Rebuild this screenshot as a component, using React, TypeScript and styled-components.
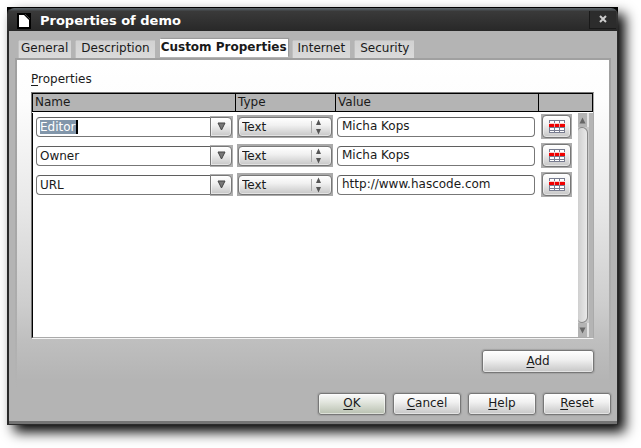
import React, { useEffect, useRef, useState } from "react";
import styled, { createGlobalStyle, css } from "styled-components";

const GlobalStyle = createGlobalStyle`
  *, *::before, *::after { box-sizing: border-box; }
  body { margin: 0; background: #fff; }
  body, button, input, select {
    font-family: "DejaVu Sans", sans-serif;
    font-size: 12px;
    line-height: 14px;
    color: #1a1a1a;
  }
`;

const Dialog = styled.main`
  margin: 7px 23px 23px 7px;
  background: #000;
  box-shadow: 7px 7px 12px #000;
`;

const TitleBar = styled.header`
  display: flex;
  align-items: center;
  height: 24px;
  padding: 2px 0 0 9px;
  border-top: 1px solid #000;
  border-radius: 7px 7px 0 0;
  background: linear-gradient(#5c6468 0, #4a5054 2px, #3a3a3a 3px, #282828 100%);
  border-left: 1px solid #333;
`;

const Title = styled.h1`
  flex: 1;
  margin: 0 0 0 9px;
  font-size: 13px;
  line-height: 16px;
  color: #fff;
`;

const CloseButton = styled.button`
  display: flex;
  align-items: center;
  justify-content: center;
  width: 27px;
  height: 18px;
  margin: 0 2px 2px 0;
  padding: 0;
  border: 0;
  border-left: 1px solid #191919;
  border-bottom: 1px solid #191919;
  background: #2c2c2c;
`;

const Body = styled.div`
  padding: 8px 6px 9px;
  border: solid #2b2b2b;
  border-width: 0 1px 1px 2px;
  box-shadow: inset 0 -3px #747474;
  background: #b4b4b4;
`;

const TabList = styled.div`
  display: flex;
  align-items: flex-end;
  gap: 5px;
  height: 19px;
  padding-left: 4px;
`;

const Tab = styled.button<{ $active: boolean }>`
  height: 17px;
  padding: 0 5px 3px;
  border: 0;
  white-space: nowrap;
  background: linear-gradient(#d2d2d2, #dadada);
  box-shadow: 0 -1px #c4c4c4, -1px 0 #c0c0c0;
  &:first-child { padding-left: 2px; padding-right: 3px; }
  ${(p) =>
    p.$active &&
    css`
      align-self: flex-start;
      height: 18px;
      padding: 0 1px 2px;
      font-weight: bold;
      background: #fff;
      box-shadow: 1px -1px 1px #9a9a9a;
    `}
`;

const PanelFrame = styled.div`
  padding: 2px 2px 0;
  background: linear-gradient(#a0a0a0 0, #a6a6a6 160px, #b4b4b4 100%);
`;

const Panel = styled.section`
  padding: 12px 15px 15px 14px;
  background: linear-gradient(
    #fff 0,
    #fdfdfd 40px,
    #e8e8e8 145px,
    #cdcdcd 245px,
    #bfbfbf 280px,
    #b4b4b4 320px
  );
`;

const Caption = styled.h2`
  margin: 0 0 6px;
  font-size: 12px;
  line-height: 14px;
  font-weight: normal;
`;

const Mnemonic = styled.span`
  text-decoration: underline;
  text-decoration-thickness: 1px;
  text-underline-offset: 2px;
`;

const ListBox = styled.div`
  display: grid;
  grid-template-columns: 1fr 15px;
  grid-template-rows: 20px 225px;
  border: 1px solid #777;
  border-right-color: #aaa;
  border-bottom-color: #f4f4f4;
  background: #fff;
`;

const Table = styled.table`
  grid-area: 1 / 1 / 3 / 3;
  align-self: start;
  width: 100%;
  table-layout: fixed;
  border-collapse: separate;
  border-spacing: 0;
`;

const HeadCell = styled.th<{ $width?: number }>`
  width: ${(p) => (p.$width ? `${p.$width}px` : "auto")};
  height: 19px;
  padding: 0 2px 1px;
  border: solid #000;
  border-width: 1px 0 1px 1px;
  background: #b4b4b4;
  font-weight: normal;
  text-align: left;
  &:last-child { border-right-width: 1px; }
`;

const Cell = styled.td`
  height: 29px;
  padding: 0 3px 0 2px;
  &:first-child { padding-left: 4px; }
`;

const ListEdge = styled.div`
  grid-area: 2 / 1;
  border-left: 1px solid #000;
  border-bottom: 1px solid #aaa;
`;

const ScrollBar = styled.div`
  grid-area: 2 / 2;
  display: flex;
  flex-direction: column;
  border-right: 4px solid #b4b4b4;
  border-bottom: 1px solid #aaa;
  background: #c9c9c9;
`;

const ScrollArrow = styled.button`
  display: flex;
  align-items: center;
  justify-content: center;
  height: 14px;
  padding: 0;
  border: 0;
  border-right: 2px solid #e4e4e4;
  background: #b4b4b4;
`;

const ScrollThumb = styled.div`
  flex: 1;
  margin-right: 1px;
  border: 1px solid #888;
  border-left: 0;
  border-radius: 4px 6px 6px 4px;
  background: linear-gradient(90deg, #cfcfcf, #e9e9e9);
`;

const Field = styled.input`
  display: block;
  width: 100%;
  height: 20px;
  padding: 0 4px 2px;
  border: 1px solid #777;
  border-top-color: #5f5f5f;
  border-radius: 4px;
  outline: none;
  background: #fff;
`;

const Combo = styled.div`
  position: relative;
  display: flex;
  height: 22px;
  margin-right: -1px;
  align-items: center;
`;

const ComboInput = styled(Field)`
  flex: 1;
  min-width: 0;
  padding: 0 3px;
  border-right: 0;
  border-radius: 4px 0 0 4px;
  &::selection { background: #8296aa; color: #fff; }
`;

const Caret = styled.span`
  position: absolute;
  left: 40px;
  top: 4px;
  width: 2px;
  height: 14px;
  background: #000;
`;

const raised = css`
  border: 1px solid #777;
  background: linear-gradient(#fff 0, #f1f1f1 40%, #c6c6c6 100%);
  box-shadow: inset 0 0 0 1px #ffffff80;
`;

const ComboBackdrop = styled.div`
  height: 22px;
  padding: 1px 1px 1px 0;
  background: #b0b0b0;
`;

const ComboButton = styled.button`
  display: flex;
  align-items: center;
  justify-content: center;
  width: 22px;
  height: 20px;
  padding: 0;
  ${raised}
  border-radius: 0 4px 4px 0;
`;

const SelectWrap = styled.div`
  display: grid;
  align-items: center;
  height: 23px;
  margin-right: -1px;
  padding: 1px;
  background: #aaa;
  svg {
    grid-area: 1 / 1;
    justify-self: end;
    margin-right: 10px;
    pointer-events: none;
    z-index: 1;
  }
`;

const Select = styled.select`
  grid-area: 1 / 1;
  width: 100%;
  height: 20px;
  padding: 0 3px;
  appearance: none;
  outline: none;
  ${raised}
  border-radius: 4px;
`;

const RemoveBackdrop = styled.div`
  width: 31px;
  padding: 1px;
  margin-left: 1px;
  background: #adadad;
`;

const RemoveButton = styled.button`
  display: flex;
  align-items: center;
  justify-content: center;
  width: 100%;
  height: 23px;
  padding: 0;
  ${raised}
  border-radius: 4px;
`;

const PushButton = styled.button<{ $wide?: boolean; $primary?: boolean }>`
  width: ${(p) => (p.$wide ? 112 : 68)}px;
  height: ${(p) => (p.$wide ? 23 : 22)}px;
  padding: 0 0 2px;
  ${raised}
  border-radius: 3px;
  box-shadow: inset 0 0 0 1px #ffffff80, 0 0 1px 1px #a2a2a2;
  ${(p) =>
    p.$primary &&
    css`
      background: linear-gradient(#fafafa 0, #e2e6de 40%, #b8c0b0 100%);
    `}
`;

const AddRow = styled.div`
  display: flex;
  justify-content: flex-end;
  padding-top: 11px;
`;

const Footer = styled.footer`
  display: flex;
  justify-content: flex-end;
  gap: 7px;
  padding-top: 5px;
`;

const DocumentIcon = () => (
  <svg width="14" height="16" viewBox="0 0 14 16" aria-hidden="true">
    <rect width="14" height="16" fill="#000" />
    <path d="M2 2h5l5 5v7H2z" fill="#fff" />
    <path d="M8 1l5 5" stroke="#444" strokeWidth="1" />
  </svg>
);

const DownTriangle = () => (
  <svg width="9" height="9" viewBox="0 0 9 9" aria-hidden="true">
    <path d="M1 1h7L4.500 8z" fill="#777" stroke="#444" />
  </svg>
);

const Spinner = () => (
  <svg width="11" height="16" viewBox="0 0 11 16" aria-hidden="true">
    <path d="M.5 2v12" stroke="#aaa" />
    <path d="M5 6L7.500 .5 10 6zM5 10h5L7.500 15.500z" fill="#555" />
  </svg>
);

const GridIcon = () => (
  <svg width="16" height="13" viewBox="0 0 16 13" shapeRendering="crispEdges" aria-hidden="true">
    <rect width="16" height="13" fill="#787c90" />
    <g fill="#fff">
      {[1, 8, 11].map((y) =>
        [1, 6, 11].map((x) => (
          <rect key={`${x}-${y}`} x={x} y={y} width="4" height={y === 11 ? 1 : 2} />
        ))
      )}
    </g>
    <path d="M0 3h16v1H0z" fill="#f4d0d0" />
    <path d="M0 4h5v3H0zM6 4h4v3H6zM11 4h5v3h-5z" fill="#f00000" />
    <path d="M5 4h1v3H5zM10 4h1v3h-1z" fill="#f0a0a0" />
  </svg>
);

const ArrowIcon = ({ down }: { down?: boolean }) => (
  <svg width="7" height="7" viewBox="0 0 7 7" aria-hidden="true">
    <path d={down ? "M.5 .5h6l-3 6z" : "M.5 6.500h6l-3-6z"} fill="#666" />
  </svg>
);

const Keyed = ({ text }: { text: string }) => (
  <>
    <Mnemonic>{text[0]}</Mnemonic>
    {text.slice(1)}
  </>
);

const tabs = ["General", "Description", "Custom Properties", "Internet", "Security"];
const properties = [
  { name: "Editor", value: "Micha Kops" },
  { name: "Owner", value: "Micha Kops" },
  { name: "URL", value: "http://www.hascode.com" },
];

function NameCombo({ name, focused }: { name: string; focused: boolean }) {
  const ref = useRef<HTMLInputElement>(null);
  const [selected, setSelected] = useState(focused);
  useEffect(() => {
    if (focused && ref.current) {
      ref.current.focus();
      ref.current.select();
    }
  }, [focused]);
  return (
    <Combo>
      <ComboInput
        ref={ref}
        aria-label="Name"
        spellCheck={false}
        defaultValue={name}
        onChange={() => setSelected(false)}
        onBlur={() => setSelected(false)}
      />
      {selected && <Caret />}
      <ComboBackdrop>
        <ComboButton type="button" aria-label="Show names">
          <DownTriangle />
        </ComboButton>
      </ComboBackdrop>
    </Combo>
  );
}

export default function App() {
  const [active, setActive] = useState("Custom Properties");
  return (
    <>
      <GlobalStyle />
      <Dialog>
        <TitleBar>
          <DocumentIcon />
          <Title>Properties of demo</Title>
          <CloseButton type="button" aria-label="Close">
            <svg width="8" height="8" viewBox="0 0 8 8" aria-hidden="true">
              <path d="M1 1l6 6M7 1L1 7" stroke="#ccc" strokeWidth="2" />
            </svg>
          </CloseButton>
        </TitleBar>
        <Body>
          <TabList role="tablist">
            {tabs.map((tab) => (
              <Tab
                key={tab}
                type="button"
                role="tab"
                aria-selected={tab === active}
                $active={tab === active}
                onClick={() => setActive(tab)}
              >
                {tab}
              </Tab>
            ))}
          </TabList>
          <PanelFrame>
            <Panel>
              <Caption>
                <Keyed text="Properties" />
              </Caption>
              <ListBox>
                <ListEdge />
                <Table>
                  <thead>
                    <tr>
                      <HeadCell $width={203}>Name</HeadCell>
                      <HeadCell $width={100}>Type</HeadCell>
                      <HeadCell>Value</HeadCell>
                      <HeadCell $width={55} aria-label="Remove" />
                    </tr>
                  </thead>
                  <tbody>
                    {properties.map((p, i) => (
                      <tr key={p.name}>
                        <Cell>
                          <NameCombo name={p.name} focused={i === 0} />
                        </Cell>
                        <Cell>
                          <SelectWrap>
                            <Select aria-label="Type" defaultValue="Text">
                              <option>Text</option>
                              <option>Number</option>
                              <option>Date</option>
                            </Select>
                            <Spinner />
                          </SelectWrap>
                        </Cell>
                        <Cell>
                          <Field aria-label="Value" spellCheck={false} defaultValue={p.value} />
                        </Cell>
                        <Cell>
                          <RemoveBackdrop>
                            <RemoveButton type="button" aria-label="Remove property">
                              <GridIcon />
                            </RemoveButton>
                          </RemoveBackdrop>
                        </Cell>
                      </tr>
                    ))}
                  </tbody>
                </Table>
                <ScrollBar>
                  <ScrollArrow type="button" aria-label="Scroll up">
                    <ArrowIcon />
                  </ScrollArrow>
                  <ScrollThumb />
                  <ScrollArrow type="button" aria-label="Scroll down">
                    <ArrowIcon down />
                  </ScrollArrow>
                </ScrollBar>
              </ListBox>
              <AddRow>
                <PushButton type="button" $wide>
                  <Keyed text="Add" />
                </PushButton>
              </AddRow>
            </Panel>
          </PanelFrame>
          <Footer>
            {["OK", "Cancel", "Help", "Reset"].map((label) => (
              <PushButton key={label} type="button" $primary={label === "OK"}>
                <Keyed text={label} />
              </PushButton>
            ))}
          </Footer>
        </Body>
      </Dialog>
    </>
  );
}
